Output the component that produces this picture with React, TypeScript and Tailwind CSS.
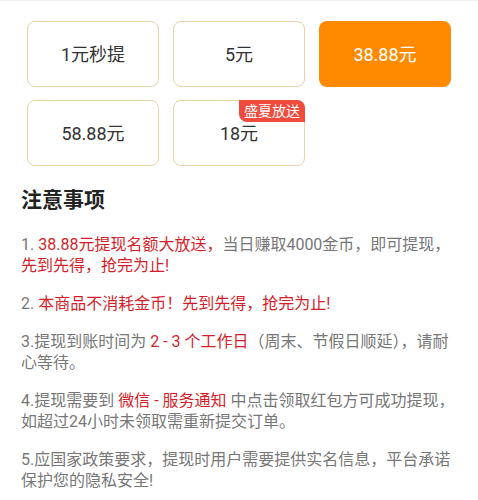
const font = { fontFamily: 'Roboto, "Noto Sans CJK SC", sans-serif' };

const options = [
  { label: '1元秒提' },
  { label: '5元' },
  { label: '38.88元', active: true },
  { label: '58.88元' },
  { label: '18元', badge: '盛夏放送' },
];

function Red({ children }: { children: React.ReactNode }) {
  return <span className="text-[#d41f2a]">{children}</span>;
}

export default function App() {
  return (
    <div className="min-h-[500px] w-[478px] border-t border-[#f0f0f0] bg-white" style={font}>
      <div className="grid grid-cols-3 gap-x-[14px] gap-y-[13px] px-[27px] pt-[20px]">
        {options.map(o => (
          <div
            key={o.label}
            className={
              o.active
                ? 'relative flex h-[66px] items-center justify-center rounded-lg bg-[#ff8a00] text-[18px] text-white'
                : 'relative flex h-[66px] items-center justify-center rounded-lg border border-[#e6d3a6] bg-white text-[18px] text-[#333]'
            }
          >
            {o.label}
            {o.badge && (
              <span className="absolute -right-px -top-px flex h-[22px] w-[66px] items-center justify-center rounded-bl-lg rounded-tr-lg bg-[#f04b3c] text-[14px] text-white">
                {o.badge}
              </span>
            )}
          </div>
        ))}
      </div>

      <div className="px-[21px] pt-[20px]">
        <h2 className="text-[21px] font-bold leading-[28px] text-[#222]">注意事项</h2>
        <div className="mt-[20px] space-y-[17px] text-[16px] leading-[21px] text-[#777]">
          <p>
            1. <Red>38.88元提现名额大放送，</Red>当日赚取4000金币，即可提现，<Red>先到先得，抢完为止!</Red>
          </p>
          <p>
            2. <Red>本商品不消耗金币！先到先得，抢完为止!</Red>
          </p>
          <p>
            3.提现到账时间为 <Red>2 - 3 个工作日</Red>（周末、节假日顺延），请耐心等待。
          </p>
          <p>
            4.提现需要到 <Red>微信 - 服务通知</Red> 中点击领取红包方可成功提现，如超过24小时未领取需重新提交订单。
          </p>
          <p>5.应国家政策要求，提现时用户需要提供实名信息，平台承诺保护您的隐私安全!</p>
        </div>
      </div>
    </div>
  );
}
